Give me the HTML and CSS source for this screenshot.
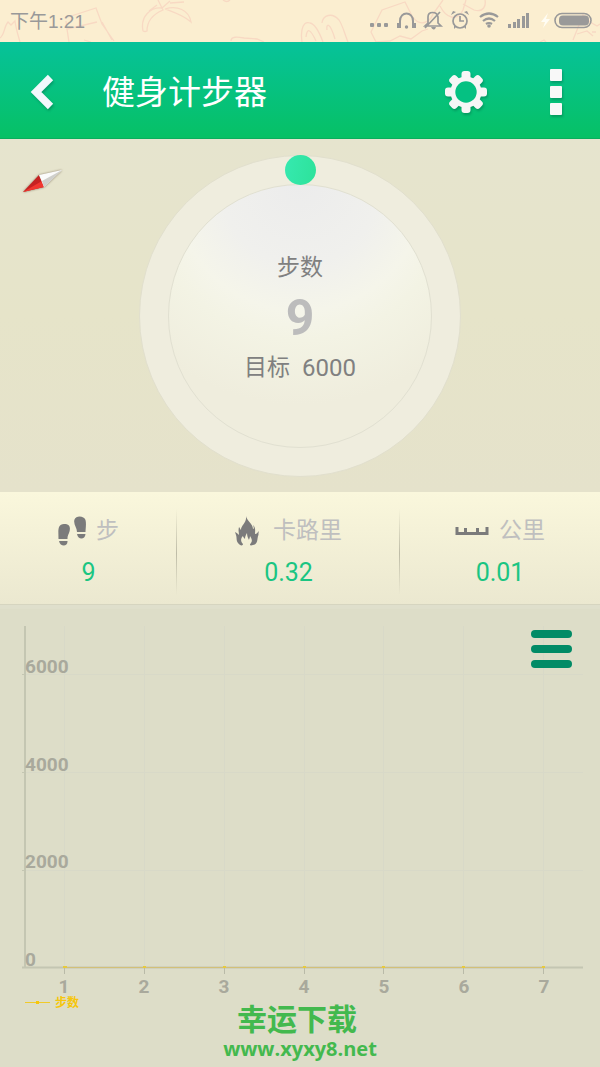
FILE: index.html
```html
<!DOCTYPE html>
<html lang="zh-CN">
<head>
<meta charset="utf-8">
<meta name="viewport" content="width=device-width, initial-scale=1">
<title>健身计步器</title>
<link rel="stylesheet" href="styles.css">
</head>
<body>
<div class="status">
  <svg class="doodles" viewBox="0 0 600 42" fill="none" stroke="#f8d9c3" stroke-width="1.3" aria-hidden="true">
    <path d="M0 38C5 34 4 26 8 22L11 25L15 21C16 29 18 35 20 42M65 18L96 8L102 24L114 41M69 42L67 29L97 22M66 21L67 30M84 40L91 42M102 22L112 40"/>
    <path d="M158 0L162 8L170 1M143 31C140 16 151 7 162 8L163 10C151 15 147 23 147 31Q145 32 143 31M165 9C177 5 189 10 191 22C183 15 173 12 165 9M170 3L184 2M149 11L157 5M223 0Q227 3 230 0M231 41C231 36 238 37 244 38L257 39L264 42"/>
    <path d="M302 42C300 28 304 21 310 23C316 24 320 34 323 42M306 37C307 28 310 28 316 41M322 23C323 15 332 12 339 20C343 26 345 35 348 42M327 30C326 23 330 22 335 39M376 42L371 32L382 10L405 2L412 16C420 28 430 22 433 14L443 0M376 42L390 41L400 36L411 39L422 31L428 29M440 6C446 18 457 22 463 10L466 0M463 4L474 10C484 13 486 5 485 0"/>
    <path d="M573 40L583 15L590 22L597 26L600 24M577 34L587 31L593 36M592 32h4M540 42L544 40L546 42"/>
  </svg>
  <time class="clock">下午1:21</time>
  <svg class="status-icons" viewBox="0 0 226 24" fill="#999" aria-hidden="true">
    <rect x="0" y="14" width="4" height="4" rx="1"/><rect x="7" y="14" width="4" height="4" rx="1"/><rect x="14" y="14" width="4" height="4" rx="1"/>
    <path d="M30 18V12C30 2 43 2 43 12V18" fill="none" stroke="#999" stroke-width="2"/><path d="M27 14h4v5h-4zM42 14h4v5h-4z"/><circle cx="36.500" cy="18" r="1.700"/>
    <g fill="none" stroke="#999" stroke-width="1.700"><path d="M55 17H71L68 14V8C67 2 58 2 58 8V14ZM55 19L70 3"/><circle cx="90" cy="12" r="7"/><path d="M90 7V12H94"/></g>
    <path d="M61 18h5q-1 3-2.500 2.500T61 18M81 6L86 3L83 2ZM99 6L94 3L97 2ZM84 17h3l-3 3zM96 17h-3l3 3z"/>
    <g fill="none" stroke="#999" stroke-width="2.200"><path d="M110 8Q119 1 128 8M113 12Q119 7 125 12M116 15Q119 13 122 15"/></g><circle cx="119" cy="17" r="1.800"/>
    <path d="M138 15h3v4h-3zM143 13h3v6h-3zM147 10h3v9h-3zM152 7h3v12h-3zM156 4h3v15h-3z"/>
    <path d="M178 4L171 13H175L173 19L180 10H176Z" fill="#fffdf4"/>
    <rect x="185" y="4.500" width="36" height="14" rx="7" fill="none" stroke="#999" stroke-width="1.600"/><rect x="189" y="6.500" width="30" height="10" rx="4"/>
  </svg>
</div>

<header class="bar">
  <button class="icon-btn back" aria-label="返回">
    <svg viewBox="0 0 24 36"><path d="M20.500 3.500L6 18L20.500 32.500" fill="none" stroke="#f2f8fc" stroke-width="7.500"/></svg>
  </button>
  <h1 class="title">健身计步器</h1>
  <button class="icon-btn" aria-label="设置">
    <svg class="gear" viewBox="-21 -21 42 42">
      <g fill="#f6f6f6"><g id="teeth"><rect x="-4.500" y="-21" width="9" height="42" rx="3"/><rect x="-21" y="-4.500" width="42" height="9" rx="3"/></g><use href="#teeth" transform="rotate(45)"/><circle r="15.500"/></g>
      <circle r="10.700" fill="#05c182"/>
    </svg>
  </button>
  <button class="icon-btn more" aria-label="更多">
    <svg viewBox="0 0 12 48" fill="#f8f8f8"><rect width="12" height="12" y="1" rx="1"/><rect width="12" height="12" y="18" rx="1"/><rect width="12" height="12" y="35" rx="1"/></svg>
  </button>
</header>

<main class="content">
  <section class="dial-area">
    <svg class="compass" viewBox="0 0 42 26" aria-hidden="true">
      <path d="M1 24L17 7L22 19Z" fill="#c62222"/><path d="M1 24L20 13L22 19Z" fill="#f0362f"/>
      <path d="M17 7L40 2L22 19Z" fill="#fbfbfb"/><path d="M20 13L40 2L22 19Z" fill="#cfcfcb"/>
    </svg>
    <div class="ring">
      <span class="knob"></span>
      <div class="disc">
        <span class="disc-label">步数</span>
        <strong class="disc-value">9</strong>
        <span class="disc-label goal"><span>目标</span><span>6000</span></span>
      </div>
    </div>
  </section>

  <section class="stats">
    <div class="stat">
      <div class="stat-head">
        <svg class="steps" viewBox="0 0 28 32" fill="#7b7b7b" aria-hidden="true">
          <path d="M0.500 24C0.500 17 -1 9 6 9C13 9 12.500 14 11 18C9.500 21 9.500 22 9.500 24ZM1 26H9.500C10 32 2 32 1 26ZM19 17C19 13 15 9 16.500 4.500C18 0 26.500 1 27.500 5C28.500 9 27.500 14 27.500 17ZM19 19H27.500C27 25 20 25 19 19Z"/>
        </svg>
        <span>步</span>
      </div>
      <span class="stat-value">9</span>
    </div>
    <div class="stat">
      <div class="stat-head">
        <svg class="fire" viewBox="0 0 24 30" fill="#7b7b7b" aria-hidden="true">
          <path d="M11 0C12 5 18 8 18 13C19 13 19 11 18 9C21 12 20 15 20 18C22 18 22 17 24 15C23 18 24 18 23 20C22 24 23 28 18 29C15 30 14 29 16 27C18 24 16 22 15 20C15 22 14 23 14 24C13 22 12 20 12 17C11 19 10 20 10 23C9 22 8 21 8 20C6 22 5 25 8 28C8 30 5 30 3 27C1 24 2 22 1 19L0 16C2 17 3 18 4 19C4 16 3 15 4 11C5 12 5 13 6 14C6 9 12 7 11 0Z"/>
        </svg>
        <span>卡路里</span>
      </div>
      <span class="stat-value">0.32</span>
    </div>
    <div class="stat">
      <div class="stat-head">
        <svg class="ruler" viewBox="0 0 34 10" aria-hidden="true"><path d="M2 1V7.500H32V1M10.500 2V7M22.500 2V7" fill="none" stroke="#7b7b7b" stroke-width="3"/></svg>
        <span>公里</span>
      </div>
      <span class="stat-value">0.01</span>
    </div>
  </section>

  <section class="chart-area">
    <button class="menu-btn" aria-label="菜单"><span></span><span></span><span></span></button>
    <svg class="chart" viewBox="0 0 600 406" role="img" aria-label="步数">
      <g stroke="#d8d9c8" fill="none">
        <path d="M64.500 21V362M144.500 21V362M224.500 21V362M304.500 21V362M383.500 21V362M463.500 21V362M543.500 21V362M26 69.500H583M26 167.500H583M26 265.500H583"/>
      </g>
      <g stroke="#c4c6b2" fill="none">
        <path d="M25 21V363M22 362.500H583" stroke-width="2"/>
        <path d="M22 69.500H25M22 167.500H25M22 265.500H25"/>
        <path d="M64.500 363V369M144.500 363V369M224.500 363V369M304.500 363V369M383.500 363V369M463.500 363V369M543.500 363V369" stroke="#b9baa8"/>
      </g>
      <path d="M64 362.500H543" stroke="#d3c078"/>
      <path d="M63 361h4v2h-4zM143 361h3v2h-3zM223 361h3v2h-3zM303 361h3v2h-3zM382 361h3v2h-3zM462 361h3v2h-3zM542 361h3v2h-3z" fill="#e7ca3d"/>
      <g class="axis-text">
        <text x="25" y="68">6000</text><text x="25" y="166">4000</text><text x="25" y="263">2000</text><text x="25" y="361">0</text>
      </g>
      <g class="axis-text centered">
        <text x="64" y="388">1</text><text x="144" y="388">2</text><text x="224" y="388">3</text><text x="304" y="388">4</text><text x="384" y="388">5</text><text x="464" y="388">6</text><text x="544" y="388">7</text>
      </g>
      <path d="M25 397.500H50" stroke="#f0ca2a"/><rect x="36" y="396" width="3" height="3" fill="#f6c60c"/>
      <text class="legend" x="55" y="402">步数</text>
    </svg>
    <footer class="brand">
      <span class="brand-name">幸运下载</span>
      <span class="brand-url">www.xyxy8.net</span>
    </footer>
  </section>
</main>
</body>
</html>
```
FILE: styles.css
```css
* { box-sizing: border-box; }

body {
  margin: 0;
  min-height: 100vh;
  display: flex;
  flex-direction: column;
  background: #ddddc8;
  font-family: Roboto, "Noto Sans CJK SC", sans-serif;
}

button {
  padding: 0;
  border: 0;
  background: none;
  cursor: pointer;
}

svg { display: block; }

.status {
  position: relative;
  display: flex;
  align-items: center;
  justify-content: space-between;
  height: 42px;
  padding: 0 4px 0 10px;
  background: #fbeed0;
  color: #999;
}

.doodles {
  position: absolute;
  inset: 0;
  width: 100%;
  height: 100%;
}

.clock {
  position: relative;
  padding-top: 1px;
  font-family: "Liberation Sans", "Noto Sans CJK SC", sans-serif;
  font-size: 19px;
  line-height: 24px;
}

.status-icons {
  position: relative;
  width: 226px;
  height: 24px;
}

.bar {
  display: flex;
  align-items: center;
  height: 97px;
  padding: 4px 38px 0 30px;
  background: linear-gradient(#06c29a, #06c165);
  border-bottom: 1px solid #0aae5d;
}

.icon-btn svg { filter: drop-shadow(1px 2px 1px rgba(0, 70, 50, 0.3)); }

.back svg { width: 24px; height: 36px; }

.title {
  flex: 1;
  margin: 0 0 0 48px;
  padding-top: 2px;
  color: #fff;
  font-size: 33px;
  font-weight: 400;
  line-height: 48px;
}

.gear { width: 42px; height: 42px; }

.more { margin-left: 63px; }
.more svg { width: 12px; height: 48px; }

.content {
  flex: 1;
  display: flex;
  flex-direction: column;
}

.dial-area {
  position: relative;
  display: flex;
  justify-content: center;
  padding: 16px 0 15px;
  background: linear-gradient(#e6e4ce, #e6e4c9 50%, #e5e2cb);
}

.compass {
  position: absolute;
  left: 22px;
  top: 29px;
  width: 42px;
  height: 26px;
  filter: drop-shadow(0 0 1px rgba(80, 60, 40, 0.6));
}

.ring {
  position: relative;
  display: flex;
  padding: 28px;
  border: 1px solid #e1dfcd;
  border-radius: 50%;
  background: #efedde;
}

.knob {
  position: absolute;
  top: -1px;
  left: calc(50% - 15px);
  width: 31px;
  height: 30px;
  border-radius: 50%;
  background: linear-gradient(100deg, #36e9b0, #2de29a);
}

.disc {
  display: flex;
  flex-direction: column;
  align-items: center;
  justify-content: center;
  width: 264px;
  height: 264px;
  padding-top: 3px;
  border: 1px solid #e1e0d1;
  border-radius: 50%;
  background: radial-gradient(circle at 50% 0, #ececec 0, #f0f0ed 27%, #f5f5ea 43%, #f3f3e4 53%, #efeddd 75%);
}

.disc-label {
  color: #808080;
  font-size: 23px;
  line-height: 32px;
}

.goal { display: flex; gap: 12px; }
.goal span:last-child { font-size: 24px; }

.disc-value {
  color: #bcbcbc;
  font-size: 50px;
  font-weight: 700;
  line-height: 68px;
}

.stats {
  display: grid;
  grid-template-columns: 177fr 223fr 200fr;
  height: 113px;
  background: linear-gradient(#faf7dc, #ebe8d0);
  border-bottom: 1px solid #d6d5c0;
}

.stat {
  display: flex;
  flex-direction: column;
  align-items: center;
  gap: 8px;
  padding-top: 23px;
  background: linear-gradient(transparent 15%, #bebca7 55%, transparent 92%) right / 1px 100% no-repeat;
}

.stat:last-child { background: none; }

.stat-head {
  display: flex;
  align-items: center;
  gap: 10px;
  color: #bfbfbf;
  font-size: 23px;
  line-height: 32px;
}

.steps { width: 28px; height: 32px; }
.fire { width: 24px; height: 30px; margin-right: 4px; }
.ruler { width: 34px; height: 10px; }

.stat-value {
  color: #1bc582;
  font-size: 25px;
  line-height: 36px;
}

.chart-area {
  position: relative;
  flex: 1;
  background: #ddddc8;
  box-shadow: inset 0 4px 1px rgba(255, 255, 255, 0.08);
}

.chart { width: 100%; height: auto; }

.axis-text {
  fill: #a9a99c;
  font-size: 19px;
  font-weight: 700;
}

.centered { text-anchor: middle; }

.legend {
  fill: #f6c60c;
  font-size: 12px;
  font-weight: 700;
}

.menu-btn {
  position: absolute;
  top: 25px;
  right: 28px;
  display: flex;
  flex-direction: column;
  gap: 7px;
}

.menu-btn span {
  width: 41px;
  height: 8px;
  border-radius: 4px;
  background: #018b66;
}

.brand {
  display: flex;
  flex-direction: column;
  align-items: center;
  margin-top: -8px;
  color: #43b94e;
  font-weight: 700;
}

.brand-name {
  padding-right: 6px;
  font-size: 30px;
  line-height: 34px;
}

.brand-url {
  font-family: "Open Sans", "Noto Sans", sans-serif;
  font-size: 20px;
  line-height: 24px;
}
```
